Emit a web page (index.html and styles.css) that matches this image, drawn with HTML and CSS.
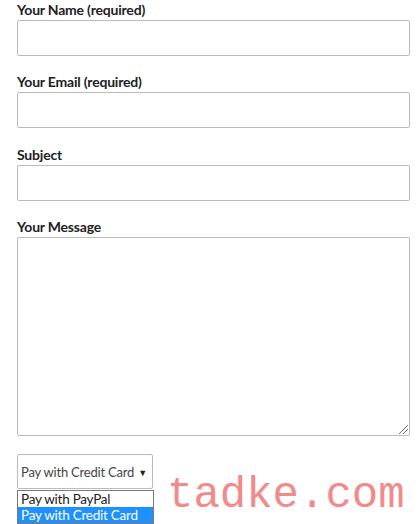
FILE: index.html
```html
<!DOCTYPE html>
<html>
<head>
<meta charset="utf-8">
<link rel="stylesheet" href="styles.css">
</head>
<body>
<form class="form">
  <div class="field">
    <label class="label">Your Name (required)</label>
    <div class="input"></div>
  </div>
  <div class="field">
    <label class="label">Your Email (required)</label>
    <div class="input"></div>
  </div>
  <div class="field">
    <label class="label">Subject</label>
    <div class="input"></div>
  </div>
  <div class="field">
    <label class="label">Your Message</label>
    <div class="textarea"><span class="grip"></span></div>
  </div>
  <div class="select-wrap">
    <div class="select">Pay with Credit Card <span class="arrow">&#9660;</span></div>
    <div class="dropdown">
      <div class="option">Pay with PayPal</div>
      <div class="option selected">Pay with Credit Card</div>
    </div>
  </div>
  <div class="submit"></div>
</form>
<div class="watermark">tadke.com</div>
</body>
</html>
```
FILE: styles.css
```css
html, body {
  margin: 0;
  padding: 0;
  background: #fff;
  overflow: hidden;
}
body {
  width: 420px;
  height: 524px;
  position: relative;
  font-family: Lato, "Liberation Sans", sans-serif;
  color: #222;
}
.form {
  padding: 1px 10px 0 17px;
}
.field {
  margin-bottom: 17.4px;
}
.label {
  display: block;
  font-size: 14px;
  font-weight: bold;
  line-height: 17px;
  margin-bottom: 2px;
  color: #222;
  letter-spacing: -0.2px;
}
.input {
  box-sizing: border-box;
  height: 36px;
  border: 1px solid #bbb;
  border-radius: 2px;
  background: #fff;
}
.textarea {
  box-sizing: border-box;
  height: 199px;
  border: 1px solid #bbb;
  border-radius: 2px;
  position: relative;
}
.grip {
  position: absolute;
  right: 1px;
  bottom: 1px;
  width: 9px;
  height: 9px;
  background: linear-gradient(135deg, transparent 45%, #777 45%, #777 52%, transparent 52%, transparent 70%, #777 70%, #777 77%, transparent 77%);
}
.select-wrap {
  position: relative;
  margin-top: 16.6px;
  width: 136px;
}
.select {
  box-sizing: border-box;
  height: 35px;
  width: 136px;
  border: 1px solid #bbb;
  border-radius: 2px;
  font-size: 13px;
  letter-spacing: -0.2px;
  color: #444;
  display: flex;
  align-items: center;
  justify-content: space-between;
  padding: 2px 5px 0 3px;
}
.arrow {
  font-size: 9px;
  color: #222;
}
.dropdown {
  position: absolute;
  left: 0;
  top: 36px;
  width: 137px;
  box-sizing: border-box;
  border: 1px solid #7a7a7a;
  background: #fff;
  z-index: 2;
  font-family: Lato, "Liberation Sans", sans-serif;
  font-size: 13.5px;
  letter-spacing: -0.25px;
}
.option {
  height: 16px;
  line-height: 16px;
  padding-left: 3px;
  color: #222;
  white-space: nowrap;
}
.option.selected {
  background: #1e90ff;
  color: #fff;
}
.submit {
  margin-top: 17px;
  width: 68px;
  height: 40px;
  background: #1a1a1a;
}
.watermark {
  position: absolute;
  left: 167px;
  top: 470px;
  font-family: "Liberation Mono", monospace;
  font-size: 44px;
  line-height: 50px;
  color: #f38a8a;
  z-index: 3;
}
```
